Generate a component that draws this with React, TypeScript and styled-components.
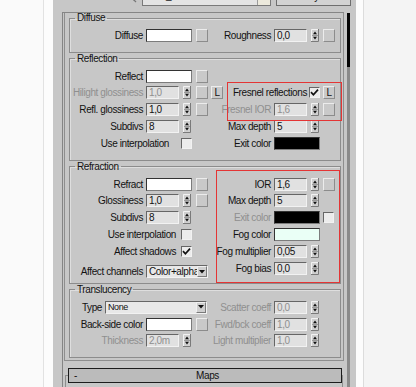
import React from 'react';
import styled, { createGlobalStyle } from 'styled-components';

const GlobalStyle = createGlobalStyle`
  html, body { margin: 0; padding: 0; }
  body {
    background: #fafafa;
    font-family: "Liberation Sans", Arial, sans-serif;
    font-size: 10px;
    letter-spacing: -0.4px;
    color: #121212;
  }
  * { box-sizing: border-box; }
`;

const Page = styled.div`
  display: flex;
  height: 387px;
  overflow: hidden;
`;

const Strip = styled.div<{ $w?: number; $bg: string; $line?: string }>`
  flex: ${p => (p.$w ? `0 0 ${p.$w}px` : '1')};
  background: ${p => p.$bg};
  border-right: ${p => (p.$line ? `1px solid ${p.$line}` : 'none')};
`;

const Panel = styled.div`
  flex: 0 0 303px;
  background: #c7c7c7;
  display: flex;
  flex-direction: column;
`;

/* top row, mostly scrolled off the top edge */
const TopRow = styled.div`
  display: flex;
  align-items: flex-end;
  height: 20px;
  margin-top: -14px;
  padding-left: 75px;
`;

const Picker = styled.svg`
  flex: none;
  margin: 0 4px 3px 0;
`;

const NameField = styled.div`
  display: flex;
  width: 129px;
  height: 20px;
  background: #e4e4e4;
  border: 1px solid #7a7a7a;
`;

const NameText = styled.span`
  flex: 1;
  padding: 3px 0 0 4px;
`;

const NameButton = styled.span`
  width: 13px;
  background: #ece9dc;
  border-left: 1px solid #9c9c9c;
`;

const TypeButton = styled.div`
  width: 75px;
  height: 20px;
  margin-left: 5px;
  background: #d2d2d2;
  border: 1px solid #6e6e6e;
  display: flex;
  align-items: center;
  justify-content: center;
`;

const Body = styled.div`
  flex: 1;
  display: flex;
  margin-top: 6px;
  padding-left: 9px;
`;

const ScrollBox = styled.div`
  width: 282px;
  border-top: 1px solid #858585;
  border-left: 1px solid #858585;
  padding-left: 1px;
`;

const RolloutBody = styled.div`
  border: 1px solid #8e8e8e;
  border-top: none;
  padding: 0 2px 1px 4px;
`;

const Scrollbar = styled.div`
  width: 3px;
  margin: 1px 0 0 3px;
  background: #8a8a8a;
`;

const Thumb = styled.div`
  height: 54px;
  background: #050505;
`;

const Group = styled.fieldset<{ $pb?: number }>`
  margin: 0 0 1px;
  padding: 4px 5px ${p => p.$pb ?? 8}px 1px;
  min-width: 0;
  border: 1px solid #8c8c8c;
  box-shadow: inset 1px 1px 0 #dedede;
`;

const Legend = styled.legend`
  margin-left: 4px;
  padding: 0 2px;
  line-height: 10px;
`;

const Columns = styled.div`
  display: grid;
  grid-template-columns: 152px 112px;
  align-items: start;
`;

const Column = styled.div<{ $label: number; $gap: number; $offset?: number }>`
  --label: ${p => p.$label}px;
  --btn-gap: ${p => p.$gap}px;
  display: flex;
  flex-direction: column;
  margin-top: ${p => p.$offset ?? 0}px;
`;

const Row = styled.div<{ $dim?: boolean; $mt?: number }>`
  display: flex;
  align-items: center;
  height: 16.8px;
  margin-top: ${p => p.$mt ?? 0}px;
  color: ${p => (p.$dim ? '#8f8f8f' : 'inherit')};
`;

const Label = styled.span<{ $w?: number; $check?: number }>`
  flex: none;
  display: flex;
  justify-content: flex-end;
  white-space: nowrap;
  line-height: 11px;
  width: ${p =>
    p.$w !== undefined
      ? `${p.$w}px`
      : p.$check !== undefined
      ? `calc(var(--label) + ${38 - p.$check}px)`
      : 'var(--label)'};
  margin-right: ${p => p.$check ?? 3}px;
`;

const Slot = styled.div`
  flex: none;
  width: 46px;
  display: flex;
  align-items: center;
`;

const Field = styled.div`
  width: 33px;
  height: 13px;
  margin-right: 4px;
  padding-left: 2px;
  line-height: 11px;
  background: #e1e1e1;
  border: 1px solid;
  border-color: #666 #f2f2f2 #f2f2f2 #666;
  white-space: nowrap;
  overflow: hidden;
`;

const Swatch = styled.div<{ $color: string }>`
  flex: none;
  width: 46px;
  height: 13px;
  background: ${p => p.$color};
  border: 1px solid;
  border-color: #333 #7c7c7c #7c7c7c #333;
`;

const MapButton = styled.div`
  flex: none;
  width: 12px;
  height: 13px;
  margin-left: var(--btn-gap);
  background: #c9c9c9;
  border: 1px solid;
  border-color: #ececec #8c8c8c #8c8c8c #ececec;
`;

const LButton = styled(MapButton)`
  margin-left: 3px;
  display: flex;
  align-items: center;
  justify-content: center;
  color: #121212;
`;

const Box = styled.div<{ $ml?: boolean }>`
  flex: none;
  width: 11px;
  height: 11px;
  margin-left: ${p => (p.$ml ? 'var(--btn-gap)' : '0')};
  background: #ececec;
  border: 1px solid;
  border-color: #666 #f2f2f2 #f2f2f2 #666;
  display: flex;
  align-items: center;
  justify-content: center;
`;

const Select = styled.div<{ $w: number; $small?: boolean }>`
  flex: none;
  display: flex;
  width: ${p => p.$w}px;
  height: 13px;
  background: #e8e8e8;
  border: 1px solid;
  border-color: #666 #f2f2f2 #f2f2f2 #666;
  font-size: ${p => (p.$small ? 9 : 10)}px;
  color: #121212;
`;

const SelectText = styled.span`
  flex: 1;
  padding-left: 2px;
  line-height: 11px;
  white-space: nowrap;
  overflow: hidden;
`;

const SelectArrow = styled.span`
  flex: none;
  width: 10px;
  display: flex;
  align-items: center;
  justify-content: center;
  background: #cfcfcf;
  border: 1px solid;
  border-color: #f0f0f0 #7a7a7a #7a7a7a #f0f0f0;
`;

const Highlight = styled.div<{ $t: number; $r: number; $b: number; $l: number }>`
  position: relative;
  &::after {
    content: '';
    position: absolute;
    top: ${p => p.$t}px;
    right: ${p => p.$r}px;
    bottom: ${p => p.$b}px;
    left: ${p => p.$l}px;
    border: 1px solid #e43535;
    pointer-events: none;
  }
`;

const MapsRollout = styled.div`
  margin: 14px 1px 0;
  height: 30px;
  border: 1px solid #8e8e8e;
  border-bottom: none;
`;

const MapsHeader = styled.div`
  display: grid;
  grid-template-columns: 20px 1fr 20px;
  align-items: center;
  height: 15px;
  margin: -8px 0 0 2px;
  background: #bbbbbb;
  border: 1px solid #1c1c1c;
  padding-left: 5px;
`;

const MapsTitle = styled.span`
  text-align: center;
`;

const Arrows = () => (
  <svg width="8" height="13" viewBox="0 0 8 13">
    <rect width="8" height="13" fill="#d0d0d0" />
    <path d="M0.5 12.5V0.5H7.5" stroke="#f2f2f2" fill="none" />
    <path d="M0 12.5H7.5V0" stroke="#7a7a7a" fill="none" />
    <line x1="1" y1="6.5" x2="7" y2="6.5" stroke="#9a9a9a" />
    <path d="M2 5.2H6L4 2.6Z" fill="#111" />
    <path d="M2 7.8H6L4 10.4Z" fill="#111" />
  </svg>
);

const Tick = () => (
  <svg width="9" height="9" viewBox="0 0 9 9">
    <path d="M1 4.2L3.4 6.8L8 1.6" stroke="#111" strokeWidth="1.7" fill="none" />
  </svg>
);

const Spinner = ({ value }: { value: string }) => (
  <Slot>
    <Field>{value}</Field>
    <Arrows />
  </Slot>
);

const Check = ({ on, ml }: { on?: boolean; ml?: boolean }) => <Box $ml={ml}>{on && <Tick />}</Box>;

const Dropdown = ({ w, text, small }: { w: number; text: string; small?: boolean }) => (
  <Select $w={w} $small={small}>
    <SelectText>{text}</SelectText>
    <SelectArrow>
      <svg width="6" height="4" viewBox="0 0 6 4">
        <path d="M0 0H6L3 3.5Z" fill="#111" />
      </svg>
    </SelectArrow>
  </Select>
);

export default function App() {
  return (
    <Page>
      <GlobalStyle />
      <Strip $w={44} $bg="#fafafa" $line="#e2e2e2" />
      <Strip $w={9} $bg="#fcfcfc" />
      <Panel>
        <TopRow>
          <Picker width="10" height="8" viewBox="0 0 10 8">
            <path d="M1 0L6 5" stroke="#3a3a3a" strokeWidth="1.6" />
            <path d="M6 5L8 7" stroke="#777" strokeWidth="1.2" />
          </Picker>
          <NameField>
            <NameText>Arch_Glass</NameText>
            <NameButton />
          </NameField>
          <TypeButton>VRayMtl</TypeButton>
        </TopRow>
        <Body>
          <ScrollBox>
            <RolloutBody>
              <Group>
                <Legend>Diffuse</Legend>
                <Columns>
                  <Column $label={72} $gap={4}>
                    <Row>
                      <Label>Diffuse</Label>
                      <Swatch $color="#fff" />
                      <MapButton />
                    </Row>
                  </Column>
                  <Column $label={48} $gap={3}>
                    <Row>
                      <Label>Roughness</Label>
                      <Spinner value="0,0" />
                      <MapButton />
                    </Row>
                  </Column>
                </Columns>
              </Group>

              <Group>
                <Legend>Reflection</Legend>
                <Columns>
                  <Column $label={72} $gap={4}>
                    <Row>
                      <Label>Reflect</Label>
                      <Swatch $color="#fff" />
                      <MapButton />
                    </Row>
                    <Row $dim>
                      <Label>Hilight glossiness</Label>
                      <Spinner value="1,0" />
                      <MapButton />
                      <LButton>L</LButton>
                    </Row>
                    <Row>
                      <Label>Refl. glossiness</Label>
                      <Spinner value="1,0" />
                      <MapButton />
                    </Row>
                    <Row>
                      <Label>Subdivs</Label>
                      <Spinner value="8" />
                    </Row>
                    <Row>
                      <Label $check={12}>Use interpolation</Label>
                      <Check />
                    </Row>
                  </Column>
                  <Column $label={48} $gap={3} $offset={16.8}>
                    <Highlight $t={-3} $r={-7} $b={-3} $l={4}>
                      <Row>
                        <Label $check={2}>Fresnel reflections</Label>
                        <Check on />
                        <LButton>L</LButton>
                      </Row>
                      <Row $dim>
                        <Label>Fresnel IOR</Label>
                        <Spinner value="1,6" />
                        <MapButton />
                      </Row>
                    </Highlight>
                    <Row>
                      <Label>Max depth</Label>
                      <Spinner value="5" />
                    </Row>
                    <Row>
                      <Label>Exit color</Label>
                      <Swatch $color="#000" />
                    </Row>
                  </Column>
                </Columns>
              </Group>

              <Group $pb={3}>
                <Legend>Refraction</Legend>
                <Columns>
                  <Column $label={72} $gap={4}>
                    <Row>
                      <Label>Refract</Label>
                      <Swatch $color="#fff" />
                      <MapButton />
                    </Row>
                    <Row>
                      <Label>Glossiness</Label>
                      <Spinner value="1,0" />
                      <MapButton />
                    </Row>
                    <Row>
                      <Label>Subdivs</Label>
                      <Spinner value="8" />
                    </Row>
                    <Row>
                      <Label $check={5}>Use interpolation</Label>
                      <Check />
                    </Row>
                    <Row>
                      <Label $check={5}>Affect shadows</Label>
                      <Check on />
                    </Row>
                    <Row $mt={3.4}>
                      <Label>Affect channels</Label>
                      <Dropdown w={62} text="Color+alpha" />
                    </Row>
                  </Column>
                  <Column $label={48} $gap={3}>
                    <Highlight $t={-6} $r={-5} $b={-6} $l={-7}>
                      <Row>
                        <Label>IOR</Label>
                        <Spinner value="1,6" />
                        <MapButton />
                      </Row>
                      <Row>
                        <Label>Max depth</Label>
                        <Spinner value="5" />
                      </Row>
                      <Row $dim>
                        <Label>Exit color</Label>
                        <Swatch $color="#000" />
                        <Check ml />
                      </Row>
                      <Row>
                        <Label>Fog color</Label>
                        <Swatch $color="#eafff6" />
                      </Row>
                      <Row>
                        <Label>Fog multiplier</Label>
                        <Spinner value="0,05" />
                      </Row>
                      <Row>
                        <Label>Fog bias</Label>
                        <Spinner value="0,0" />
                      </Row>
                    </Highlight>
                  </Column>
                </Columns>
              </Group>

              <Group>
                <Legend>Translucency</Legend>
                <Columns>
                  <Column $label={72} $gap={4}>
                    <Row>
                      <Label $w={31}>Type</Label>
                      <Dropdown w={102} text="None" small />
                    </Row>
                    <Row>
                      <Label>Back-side color</Label>
                      <Swatch $color="#fff" />
                      <MapButton />
                    </Row>
                    <Row $dim>
                      <Label>Thickness</Label>
                      <Spinner value="2,0m" />
                    </Row>
                  </Column>
                  <Column $label={48} $gap={3}>
                    <Row $dim>
                      <Label>Scatter coeff</Label>
                      <Spinner value="0,0" />
                    </Row>
                    <Row $dim>
                      <Label>Fwd/bck coeff</Label>
                      <Spinner value="1,0" />
                    </Row>
                    <Row $dim>
                      <Label>Light multiplier</Label>
                      <Spinner value="1,0" />
                    </Row>
                  </Column>
                </Columns>
              </Group>
            </RolloutBody>
            <MapsRollout>
              <MapsHeader>
                <span>-</span>
                <MapsTitle>Maps</MapsTitle>
                <span />
              </MapsHeader>
            </MapsRollout>
          </ScrollBox>
          <Scrollbar>
            <Thumb />
          </Scrollbar>
        </Body>
      </Panel>
      <Strip $w={8} $bg="#fcfcfc" $line="#dcdcdc" />
      <Strip $bg="#f4f4f4" />
    </Page>
  );
}
